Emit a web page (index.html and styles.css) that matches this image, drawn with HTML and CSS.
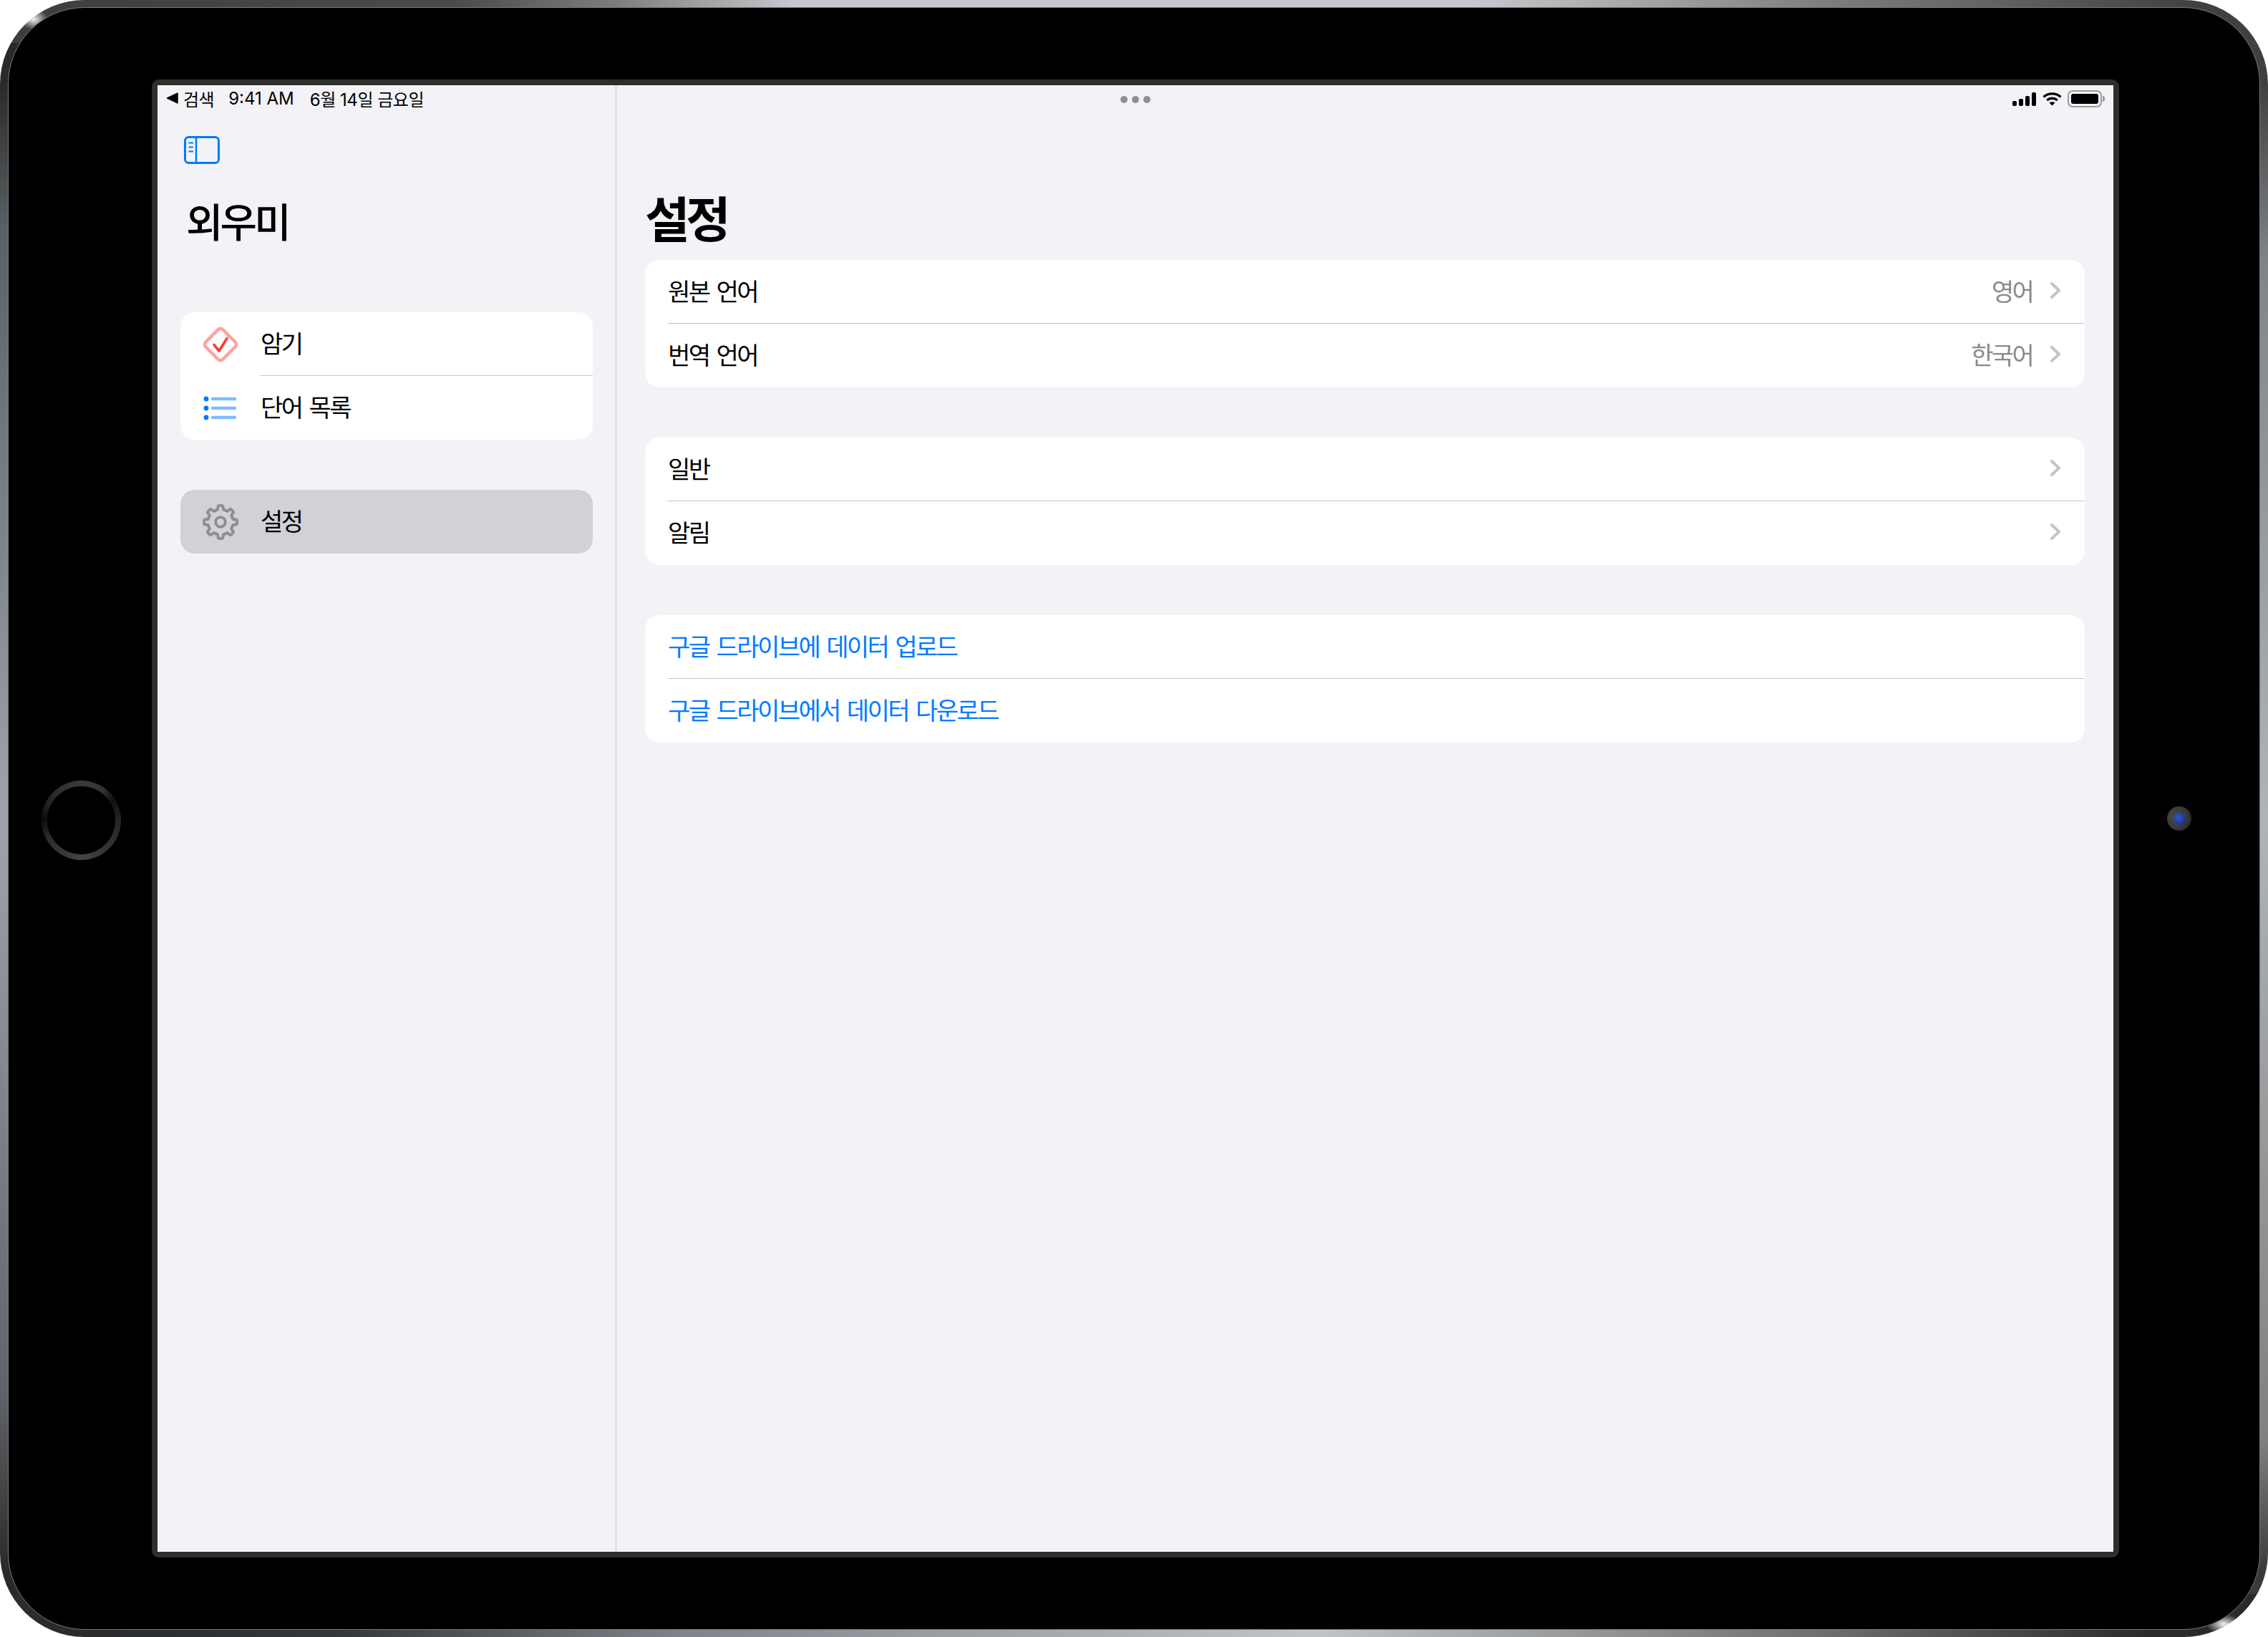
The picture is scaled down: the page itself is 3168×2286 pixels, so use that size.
FILE: index.html
```html
<!DOCTYPE html>
<html lang="ko">
<head>
    <meta charset="UTF-8">
    <meta name="viewport" content="width=device-width, initial-scale=1.0">
    <title>외우미</title>
    <link rel="stylesheet" href="styles.css">
</head>
<body>
    <div class="device">
        <div class="bezel">
            <div class="home-button"></div>
            <div class="screen-frame">
                <div class="screen">
                    <!-- 상태 표시줄 -->
                    <div class="status-bar">
                        <div class="status-left">
                            <svg class="back-arrow" viewBox="0 0 16 15"><path d="M15 1v13L1.500 7.500z" fill="#000" stroke="#000" stroke-width="1.500" stroke-linejoin="round"/></svg>
                            <span class="status-back">검색</span>
                            <span class="status-time">9:41 AM</span>
                            <span>6월 14일 금요일</span>
                        </div>
                        <div class="status-dots"><i></i><i></i><i></i></div>
                        <div class="status-right">
                            <div class="signal"><i></i><i></i><i></i><i></i></div>
                            <svg class="wifi" viewBox="0 0 27 20">
                                <path d="M1.6 7.4C8 1.4 19 1.4 25.4 7.4M6.2 12C10.400 8.400 16.600 8.400 20.800 12" fill="none" stroke="#000" stroke-width="3.400"/>
                                <path d="M9.500 15.600C12 13.700 15 13.700 17.500 15.600L13.500 19.500z" fill="#000"/>
                            </svg>
                            <div class="battery"><div class="battery-level"></div></div>
                            <div class="battery-nub"></div>
                        </div>
                    </div>

                    <aside class="sidebar">
                        <svg class="sidebar-toggle" viewBox="0 0 50 39">
                            <rect x="1.500" y="1.500" width="47" height="36" rx="5" fill="none" stroke="#007aff" stroke-width="3"/>
                            <path d="M17 2v35" stroke="#007aff" stroke-width="2.500"/>
                            <path d="M6.500 9.500h6.500M6.500 15.500h6.500M6.500 21.500h6.500" stroke="#007aff" stroke-width="2.200"/>
                        </svg>
                        <h1 class="sidebar-title">외우미</h1>

                        <div class="side-group">
                            <div class="side-row">
                                <div class="side-icon">
                                    <svg viewBox="0 0 54 54" width="54" height="54">
                                        <rect x="10" y="10" width="34" height="34" rx="4.500" transform="rotate(45 27 27)" fill="none" stroke="#ffa39e" stroke-width="4.500"/>
                                        <path d="M18 27.500L25 36L36 18.500" fill="none" stroke="#ff3b30" stroke-width="3.600" stroke-linecap="round" stroke-linejoin="round"/>
                                    </svg>
                                </div>
                                <div class="side-label">암기</div>
                            </div>
                            <div class="side-row">
                                <div class="side-icon">
                                    <svg viewBox="0 0 50 36" width="50" height="36">
                                        <g fill="#007aff">
                                            <circle cx="5" cy="5" r="3.400"/>
                                            <circle cx="5" cy="18" r="3.400"/>
                                            <circle cx="5" cy="31" r="3.400"/>
                                        </g>
                                        <g stroke="#80bcff" stroke-width="4.500" stroke-linecap="round">
                                            <path d="M14 5h31M14 18h31M14 31h31"/>
                                        </g>
                                    </svg>
                                </div>
                                <div class="side-label">단어 목록</div>
                            </div>
                        </div>

                        <div class="side-group side-group-selected">
                            <div class="side-row">
                                <div class="side-icon">
                                    <svg viewBox="0 0 48 48" width="50" height="50">
                                        <defs>
                                            <path id="gear-tooth" d="M17.500 8.300L20.200 7.400L20.900 2.400Q24 1.200 27.100 2.400L27.800 7.400L30.500 8.300" fill="none" stroke="#8e8e93" stroke-width="3.800" stroke-linecap="round" stroke-linejoin="round"/>
                                        </defs>
                                        <use href="#gear-tooth"/>
                                        <use href="#gear-tooth" transform="rotate(45 24 24)"/>
                                        <use href="#gear-tooth" transform="rotate(90 24 24)"/>
                                        <use href="#gear-tooth" transform="rotate(135 24 24)"/>
                                        <use href="#gear-tooth" transform="rotate(180 24 24)"/>
                                        <use href="#gear-tooth" transform="rotate(225 24 24)"/>
                                        <use href="#gear-tooth" transform="rotate(270 24 24)"/>
                                        <use href="#gear-tooth" transform="rotate(315 24 24)"/>
                                        <circle cx="24" cy="24" r="6.500" fill="none" stroke="#8e8e93" stroke-width="3.800"/>
                                    </svg>
                                </div>
                                <div class="side-label">설정</div>
                            </div>
                        </div>
                    </aside>

                    <main class="content">
                        <h2 class="content-title">설정</h2>

                        <div class="group">
                            <div class="row">
                                <span class="row-label">원본 언어</span>
                                <span class="row-value">영어</span>
                                <svg class="chevron" viewBox="0 0 14 23"><path d="M2 2l10 9.500L2 21" /></svg>
                            </div>
                            <div class="row">
                                <span class="row-label">번역 언어</span>
                                <span class="row-value">한국어</span>
                                <svg class="chevron" viewBox="0 0 14 23"><path d="M2 2l10 9.500L2 21" /></svg>
                            </div>
                        </div>

                        <div class="group">
                            <div class="row">
                                <span class="row-label">일반</span>
                                <svg class="chevron" viewBox="0 0 14 23"><path d="M2 2l10 9.500L2 21" /></svg>
                            </div>
                            <div class="row">
                                <span class="row-label">알림</span>
                                <svg class="chevron" viewBox="0 0 14 23"><path d="M2 2l10 9.500L2 21" /></svg>
                            </div>
                        </div>

                        <div class="group">
                            <div class="row">
                                <span class="row-label row-link">구글 드라이브에 데이터 업로드</span>
                            </div>
                            <div class="row">
                                <span class="row-label row-link">구글 드라이브에서 데이터 다운로드</span>
                            </div>
                        </div>
                    </main>
                </div>
            </div>
            <div class="camera"><div class="lens"></div></div>
        </div>
    </div>
</body>
</html>
```

FILE: styles.css
```css
* {
    box-sizing: border-box;
}

body {
    margin: 0;
    background-color: #ffffff;
    font-family: "Inter", "Noto Sans CJK KR", sans-serif;
    color: #000000;
}

/* 기기 외곽 */
.device {
    width: 3168px;
    height: 2286px;
    padding: 10px 11px;
    border-radius: 118px;
    background:
        radial-gradient(ellipse 20px 14px at 47px 27px, #f0f0f0, rgba(240, 240, 240, 0)),
        radial-gradient(ellipse 24px 14px at 3106px 2268px, #f4f4f4, rgba(244, 244, 244, 0)),
        linear-gradient(to right, #3a3e41, #484c4f 20%, #7a7c7e 27%, #c5c8cc 35%, #c5c8cc 65%, #808080 80%, #404040 97%) top / 100% 60px no-repeat,
        linear-gradient(to right, #2a2c2e 5%, #33383b 15%, #80848a 30%, #c0c4c8 58%, #707070 80%, #2a2a2a 95%) bottom / 100% 60px no-repeat,
        linear-gradient(to bottom, #2a2a2a 5%, #5a6064 14%, #a0a4a8 50%, #606468 85%, #2a2a2a 96%) left / 60px 100% no-repeat,
        linear-gradient(to bottom, #404040 5%, #808488 16%, #b0b4b8 50%, #808080 88%, #3a3a3a 96%) right / 60px 100% no-repeat;
}

.bezel {
    display: flex;
    align-items: center;
    height: 100%;
    padding-left: 46px;
    border: 1px solid #77797b;
    border-radius: 107px;
    background-color: #000000;
}

.home-button {
    flex: none;
    width: 111px;
    height: 111px;
    margin-top: 4px;
    margin-right: 43px;
    border-radius: 50%;
    background:
        radial-gradient(circle, #000000 47px, rgba(0, 0, 0, 0) 48px),
        conic-gradient(#3a3a3a, #343434 35deg, #101010 58deg, #262626 90deg, #343434 140deg, #444444 180deg, #2c2c2c 240deg, #0c0c0c 272deg, #262626 300deg, #3a3a3a);
}

.screen-frame {
    flex: none;
    width: 2748px;
    height: 2064px;
    padding: 8px;
    border-radius: 10px;
    background-color: #2e2e2c;
}

.camera {
    flex: none;
    display: flex;
    align-items: center;
    justify-content: center;
    width: 34px;
    height: 34px;
    margin-left: 67px;
    border-radius: 50%;
    background: radial-gradient(circle at 35% 45%, #4c4c4c, #383838 55%, #1a1a1a);
}

.lens {
    width: 17px;
    height: 17px;
    border-radius: 50%;
    background: radial-gradient(circle at 40% 40%, #3358c8, #24389a 60%, #121c4c);
}

/* 화면 */
.screen {
    position: relative;
    display: flex;
    width: 2732px;
    height: 2048px;
    background-color: #f2f2f7;
}

.status-bar {
    position: absolute;
    top: 0;
    left: 0;
    right: 0;
    display: grid;
    grid-template-columns: 1fr auto 1fr;
    align-items: center;
    height: 38px;
    padding: 0 12px;
    font-size: 24px;
}

.status-left {
    display: flex;
    align-items: center;
    gap: 22px;
    padding-bottom: 2px;
    letter-spacing: -0.02em;
}

.back-arrow {
    flex: none;
    width: 17px;
    height: 16px;
    margin-right: -15px;
}

.status-back {
    margin-right: -2px;
}

.status-time {
    letter-spacing: 0;
}

.status-dots {
    display: flex;
    gap: 6px;
    padding-top: 1px;
}

.status-dots i {
    width: 10px;
    height: 10px;
    border-radius: 50%;
    background-color: #8e8e93;
}

.status-right {
    display: flex;
    align-items: center;
    justify-content: flex-end;
}

.signal {
    display: flex;
    align-items: flex-end;
    gap: 3px;
    height: 19px;
    margin-right: 9px;
}

.signal i {
    width: 6px;
    border-radius: 2px;
    background-color: #000000;
}

.signal i:nth-child(1) { height: 7px; }
.signal i:nth-child(2) { height: 10px; }
.signal i:nth-child(3) { height: 14px; }
.signal i:nth-child(4) { height: 19px; }

.wifi {
    width: 27px;
    height: 20px;
    margin-right: 8px;
}

.battery {
    width: 48px;
    height: 24px;
    padding: 3px;
    border: 2px solid #9b9b9b;
    border-radius: 7px;
}

.battery-level {
    height: 100%;
    border-radius: 3px;
    background-color: #000000;
}

.battery-nub {
    width: 3px;
    height: 8px;
    margin-left: 1px;
    border-radius: 0 3px 3px 0;
    background-color: #9b9b9b;
}

/* 사이드바 */
.sidebar {
    flex: none;
    width: 641px;
    padding: 71px 32px 0;
    border-right: 1px solid #c6c6c8;
}

.sidebar-toggle {
    display: block;
    width: 50px;
    height: 39px;
    margin-left: 5px;
}

.sidebar-title {
    height: 60px;
    margin: 52px 0 95px 8px;
    font-size: 56px;
    font-weight: 500;
    line-height: 60px;
    letter-spacing: -0.07em;
}

.side-group {
    margin-bottom: 70px;
    border-radius: 20px;
    background-color: #ffffff;
}

.side-group-selected {
    background-color: #d1d1d6;
}

.side-row {
    display: flex;
    align-items: center;
    height: 89px;
}

.side-icon {
    flex: none;
    display: flex;
    align-items: center;
    justify-content: center;
    width: 112px;
}

.side-label {
    flex: 1;
    align-self: stretch;
    display: flex;
    align-items: center;
    padding-bottom: 5px;
    font-size: 34px;
    letter-spacing: -0.075em;
    word-spacing: 3px;
}

.side-row:first-child:not(:last-child) .side-label {
    padding-bottom: 3px;
    border-bottom: 1px solid #c6c6c8;
}

/* 본문 */
.content {
    flex: 1;
    padding: 148px 40px 0;
}

.content-title {
    height: 80px;
    margin: 0 0 16px;
    font-size: 68px;
    font-weight: 700;
    line-height: 80px;
    letter-spacing: -0.08em;
}

.group {
    margin-bottom: 70px;
    padding-left: 32px;
    border-radius: 20px;
    background-color: #ffffff;
}

.row {
    display: flex;
    align-items: center;
    height: 89px;
    padding-right: 34px;
    padding-bottom: 5px;
}

.row:first-child {
    padding-bottom: 3px;
    border-bottom: 1px solid #c6c6c8;
}

.row-label {
    flex: 1;
    font-size: 34px;
    letter-spacing: -0.075em;
    word-spacing: 3px;
}

.row-link {
    color: #007aff;
}

.row-value {
    font-size: 34px;
    letter-spacing: -0.08em;
    color: #8a8a8e;
}

.chevron {
    flex: none;
    width: 14px;
    height: 23px;
    margin-left: 25px;
}

.chevron path {
    fill: none;
    stroke: #c4c4c7;
    stroke-width: 4;
    stroke-linecap: round;
    stroke-linejoin: round;
}
```
